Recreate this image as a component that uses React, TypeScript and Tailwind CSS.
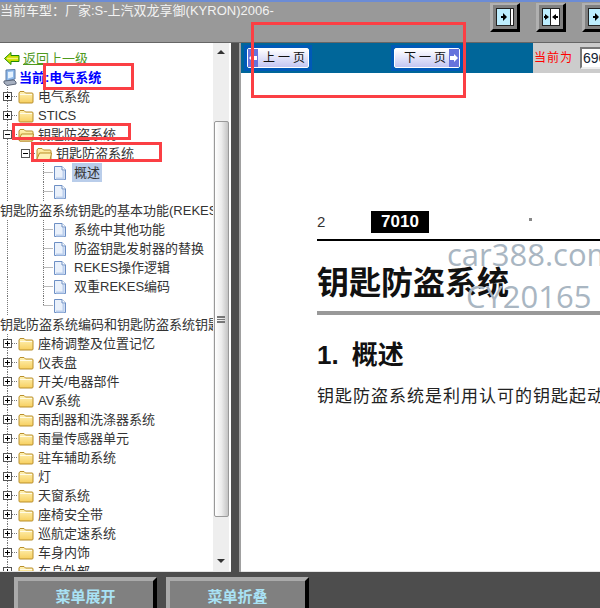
import React from "react";

const Folder = ({ open = false }: { open?: boolean }) => (
    <svg width="16" height="14" viewBox="0 0 16 14" className="shrink-0">
        <defs>
            <linearGradient id="fld" x1="0" y1="0" x2="0" y2="1">
                <stop offset="0" stopColor="#fff3b8" />
                <stop offset="1" stopColor="#f7cf5e" />
            </linearGradient>
        </defs>
        <path d="M1 3 L2 1.5 H6 L7.5 3 H14 Q15 3 15 4 V12 Q15 13 14 13 H2 Q1 13 1 12 Z" fill="url(#fld)" stroke="#b98f2c" strokeWidth="1" />
        {open ? <path d="M1 12 L3.5 6 H15.5 L14 13 H2 Z" fill="#fdf0b5" stroke="#b98f2c" strokeWidth="1" /> : <path d="M2 4.5 H14" stroke="#fffbe6" strokeWidth="1" />}
    </svg>
);

const Doc = () => (
    <svg width="12" height="14" viewBox="0 0 12 14" className="shrink-0">
        <path d="M0.5 0.5 H8 L11.5 4 V13.5 H0.5 Z" fill="#eaf1fb" stroke="#6d8fc4" />
        <path d="M8 0.5 V4 H11.5" fill="#fff" stroke="#6d8fc4" />
        <path d="M9.5 5 V12.5 H2" fill="none" stroke="#bcd0ee" strokeWidth="2" />
    </svg>
);

const Lead = ({ level, state, last = false }: { level: number; state?: "plus" | "minus"; last?: boolean }) => {
    const w = level === 0 ? 18 : level === 1 ? 36 : 54;
    const bx = level === 0 ? 3 : 21;
    return (
        <svg width={w} height="19" className="shrink-0">
            <path d="M7.5 0 V19" stroke="#777" strokeDasharray="1 1" />
            {level === 2 && <path d={last ? "M43.5 0 V10 M43.5 9.5 H53" : "M43.5 0 V19 M43.5 9.5 H53"} stroke="#777" strokeDasharray="1 1" fill="none" />}
            {level < 2 && <path d={`M${bx + 9} 9.5 H${w}`} stroke="#777" strokeDasharray="1 1" />}
            {level < 2 && <rect x={bx + 0.5} y="5.5" width="8" height="8" fill="#fff" stroke="#555" />}
            {level < 2 && <path d={`M${bx + 2} 9.5 H${bx + 7}`} stroke="#000" />}
            {state === "plus" && <path d={`M${bx + 4.5} 7 V12`} stroke="#000" />}
        </svg>
    );
};

const FolderRow = ({ label, open = false, level = 0 }: { label: string; open?: boolean; level?: number }) => (
    <div className="flex h-[19px] items-center whitespace-nowrap">
        <Lead level={level} state={open ? "minus" : "plus"} />
        <Folder open={open} />
        <span className="ml-[4px]">{label}</span>
    </div>
);

const DocRow = ({ label, selected = false, last = false }: { label?: string; selected?: boolean; last?: boolean }) => (
    <div className="flex h-[19px] items-center whitespace-nowrap">
        <Lead level={2} last={last} />
        <Doc />
        {label && <span className={selected ? "ml-[6px] bg-[#b9cdea] px-[2px]" : "ml-[8px]"}>{label}</span>}
    </div>
);

const ToolButton = ({ split = false }: { split?: boolean }) => (
    <div className="box-border h-[29px] w-[30px] shrink-0 border-t-[2px] border-l-[3px] border-r-[3px] border-b-[3px] border-t-[#b0b0b0] border-l-[#b0b0b0] border-r-black border-b-black bg-[#808080] px-[3px] pt-[3px]">
        <svg width="18" height="18" viewBox="0 0 18 18">
            <rect x="0.5" y="0.5" width="17" height="17" fill="#bdeeff" stroke="#222" />
            {split ? (
                <>
                    <rect x="8" y="1" width="9" height="16" fill="#fff" />
                    <path d="M8.5 1 V17" stroke="#222" />
                    <path d="M3 6 L7 9 L3 12 Z M14 6 L10 9 L14 12 Z" fill="#000" />
                    <path d="M2 8 H4 V10 H2 Z M13 8 H16 V10 H13 Z" fill="#000" />
                </>
            ) : (
                <>
                    <rect x="14" y="1" width="3" height="16" fill="#fff" />
                    <path d="M14.5 1 V17" stroke="#222" />
                    <path d="M7 5 L11 9 L7 13 Z M5 8 H8 V10 H5 Z" fill="#000" />
                </>
            )}
        </svg>
    </div>
);

const NavButton = ({ label, dir }: { label: string; dir: "prev" | "next" }) => (
    <div className={dir === "prev" ? "h-[26px] w-[68px] border-[3px] border-[#0059b8]" : "h-[26px] w-[72px] border-[3px] border-[#0059b8]"}>
        <div className={dir === "prev" ? "flex h-[20px] flex-row items-center rounded-[2px] border border-[#ffffff] bg-gradient-to-b from-[#ffffff] to-[#c4c6f2] text-[12px] text-[#111]" : "flex h-[20px] flex-row-reverse items-center rounded-[2px] border border-[#ffffff] bg-gradient-to-b from-[#ffffff] to-[#c4c6f2] text-[12px] text-[#111]"}>
            <div className="flex h-full w-[10px] shrink-0 items-center justify-center bg-[#6673dc]">
                <svg width="8" height="8" viewBox="0 0 8 8">
                    <path d={dir === "prev" ? "M0 4 L4 0 V2 H8 V6 H4 V8 Z" : "M8 4 L4 0 V2 H0 V6 H4 V8 Z"} fill="#fff" />
                </svg>
            </div>
            <span className={dir === "prev" ? "flex-1 whitespace-nowrap pl-[5px] text-center tracking-[3px]" : "flex-1 whitespace-nowrap pl-[9px] text-left tracking-[3px]"}>{label}</span>
        </div>
    </div>
);

const BottomButton = ({ label }: { label: string }) => (
    <div className="box-border flex h-[36px] w-[143px] justify-center border-t-[4px] border-l-[4px] border-r-[4px] border-t-[#aaaaaa] border-l-[#aaaaaa] border-r-black bg-[#808080] pt-[5px] text-[15px] font-bold tracking-[0px] text-[#a9e2f5]">
        {label}
    </div>
);

const Note = ({ className }: { className: string }) => (
    <div className={"absolute box-border border-[3px] border-[#fb3f44] " + className} />
);

export default function App() {
    return (
        <div className="relative flex h-[608px] w-[600px] flex-col overflow-hidden bg-[#4d4d4d] font-['Liberation_Sans','Noto_Sans_CJK_SC',sans-serif] text-[13px] text-[#333]">
            <header className="h-[43px] shrink-0 border-t-[2px] border-b border-t-[#6c8cd5] border-b-[#666] bg-[#999999]">
                <div className="flex items-start justify-between">
                    <div className="mt-[1px] whitespace-nowrap text-[13px] leading-[16px] text-[#f2f2f2]">当前车型：厂家:S-上汽双龙享御(KYRON)2006-</div>
                    <div className="mr-[-12px] mt-[1px] flex gap-[16px]">
                        <ToolButton />
                        <ToolButton split />
                        <ToolButton />
                    </div>
                </div>
            </header>

            <main className="flex h-[529px] shrink-0">
                <aside className="box-border flex h-full w-[231px] shrink-0 border-b border-[#e4e4e4] bg-white">
                    <div className="h-full w-[213px] shrink-0 overflow-hidden pt-[6px] pl-0">
                        <div className="flex h-[19px] items-center whitespace-nowrap pl-[4px]">
                            <svg width="16" height="13" viewBox="0 0 16 13" className="mr-[3px] shrink-0">
                                <path d="M0.5 6.5 L7 0.5 V3.5 H15 V9.5 H7 V12.5 Z" fill="#c8e000" stroke="#1f8a00" />
                                <path d="M3 6.5 H14" stroke="#f4f27a" strokeWidth="1.5" />
                            </svg>
                            <span className="text-[#4f9a1e] underline">返回上一级</span>
                        </div>
                        <div className="flex h-[19px] items-center whitespace-nowrap pl-[3px]">
                            <svg width="14" height="17" viewBox="0 0 14 17" className="mr-[2px] shrink-0">
                                <path d="M3 1 L12 0.5 V10 L3 12 Z" fill="#8fb9ea" stroke="#5c7ca8" />
                                <path d="M5 3 L10 2.5 V8 L5 9.5 Z" fill="#e4f2ff" />
                                <path d="M1 12 L11 11 L13 13 V15 L4 16.5 L1 14 Z" fill="#a7b0c0" stroke="#5c6678" />
                            </svg>
                            <span className="font-bold text-[#0000ff]">当前:电气系统</span>
                        </div>
                        <FolderRow label="电气系统" />
                        <FolderRow label="STICS" />
                        <FolderRow label="钥匙防盗系统" open />
                        <FolderRow label="钥匙防盗系统" open level={1} />
                        <DocRow label="概述" selected />
                        <DocRow />
                        <div className="flex h-[19px] items-center whitespace-nowrap">钥匙防盗系统钥匙的基本功能(REKES)</div>
                        <DocRow label="系统中其他功能" />
                        <DocRow label="防盗钥匙发射器的替换" />
                        <DocRow label="REKES操作逻辑" />
                        <DocRow label="双重REKES编码" />
                        <DocRow last />
                        <div className="flex h-[19px] items-center whitespace-nowrap">钥匙防盗系统编码和钥匙防盗系统钥匙的登记</div>
                        <FolderRow label="座椅调整及位置记忆" />
                        <FolderRow label="仪表盘" />
                        <FolderRow label="开关/电器部件" />
                        <FolderRow label="AV系统" />
                        <FolderRow label="雨刮器和洗涤器系统" />
                        <FolderRow label="雨量传感器单元" />
                        <FolderRow label="驻车辅助系统" />
                        <FolderRow label="灯" />
                        <FolderRow label="天窗系统" />
                        <FolderRow label="座椅安全带" />
                        <FolderRow label="巡航定速系统" />
                        <FolderRow label="车身内饰" />
                        <FolderRow label="车身外部" />
                    </div>
                    <div className="flex h-full w-[16px] shrink-0 flex-col items-center bg-[#eeeeee]">
                        <div className="flex h-[17px] w-full shrink-0 items-center justify-center">
                            <div className="h-0 w-0 border-x-[4px] border-b-[4px] border-x-transparent border-b-[#333]" />
                        </div>
                        <div className="mt-[61px] flex h-[396px] w-[15px] shrink-0 items-center justify-center rounded-[2px] border border-[#999] bg-gradient-to-r from-[#ffffff] via-[#ececec] to-[#c4c4c4]">
                            <div className="h-[7px] w-[8px] border-y border-[#777] bg-[linear-gradient(#777_1px,transparent_1px)] bg-[length:8px_2px]" />
                        </div>
                        <div className="flex w-full flex-1 items-end justify-center pb-[8px]">
                            <div className="h-0 w-0 border-x-[4px] border-t-[4px] border-x-transparent border-t-[#333]" />
                        </div>
                    </div>
                    <div className="w-[2px] shrink-0 bg-white" />
                </aside>

                <div className="w-[8px] shrink-0 bg-[#4d4d4d]" />
                <div className="w-[2px] shrink-0 bg-[#a0a0a0]" />

                <section className="relative box-border flex h-full flex-1 flex-col overflow-hidden border-b border-[#e4e4e4] bg-white">
                    <div className="flex h-[30px] shrink-0">
                        <div className="flex w-[292px] shrink-0 items-center bg-[#006699] pb-[1px] pl-[3px]">
                            <NavButton label="上一页" dir="prev" />
                            <div className="ml-[79px]">
                                <NavButton label="下一页" dir="next" />
                            </div>
                        </div>
                        <div className="flex flex-1 items-center whitespace-nowrap bg-[#cccccc] pl-[1px]">
                            <span className="text-[12px] tracking-[1px] text-[#ff0000]">当前为</span>
                            <div className="ml-[7px] h-[22px] w-[60px] shrink-0 border-2 border-t-[#777] border-l-[#777] border-r-[#eee] border-b-[#eee] bg-white pl-[1px] text-[14px] leading-[18px] text-[#123]">696</div>
                        </div>
                    </div>

                    <div className="pl-[76px] text-black">
                        <div className="mt-[138px] flex h-[22px] items-center">
                            <span className="w-[54px] text-[15px] text-[#333]">2</span>
                            <span className="flex h-[22px] w-[58px] items-center justify-center bg-black text-[17px] font-bold text-white">7010</span>
                        </div>
                        <div className="mt-[6px] h-[2px] bg-black" />
                        <div className="mt-[22px] whitespace-nowrap text-[32px] font-bold leading-[40px] text-[#111]">钥匙防盗系统</div>
                        <div className="mt-[8px] h-[4px] bg-[#999999]" />
                        <div className="mt-[24px] whitespace-nowrap text-[26px] font-bold leading-[32px] text-[#111]">
                            1.<span className="ml-[13px]">概述</span>
                        </div>
                        <div className="mt-[14px] whitespace-nowrap text-[17px] leading-[24px] tracking-[1px] text-[#222]">钥匙防盗系统是利用认可的钥匙起动发动机</div>
                    </div>

                    <div className="absolute left-[206px] top-[191px] whitespace-nowrap font-['Open_Sans',sans-serif] text-[31px] leading-[40px] text-[#a9b6c2]">car388.com</div>
                    <div className="absolute left-[225px] top-[233px] whitespace-nowrap font-['Open_Sans',sans-serif] text-[31px] leading-[40px] text-[#a9b6c2]">CY20165</div>
                    <div className="absolute left-[288px] top-[175px] h-[3px] w-[3px] bg-[#888]" />
                </section>
            </main>

            <footer className="flex h-[36px] shrink-0 gap-[9px] bg-[#4d4d4d] pl-[14px] pt-[5px]">
                <BottomButton label="菜单展开" />
                <BottomButton label="菜单折叠" />
            </footer>

            <Note className="left-[43px] top-[63px] h-[27px] w-[91px]" />
            <Note className="left-[12px] top-[123px] h-[17px] w-[119px]" />
            <Note className="left-[31px] top-[142px] h-[20px] w-[131px]" />
            <Note className="left-[251px] top-[22px] h-[76px] w-[215px]" />
        </div>
    );
}
